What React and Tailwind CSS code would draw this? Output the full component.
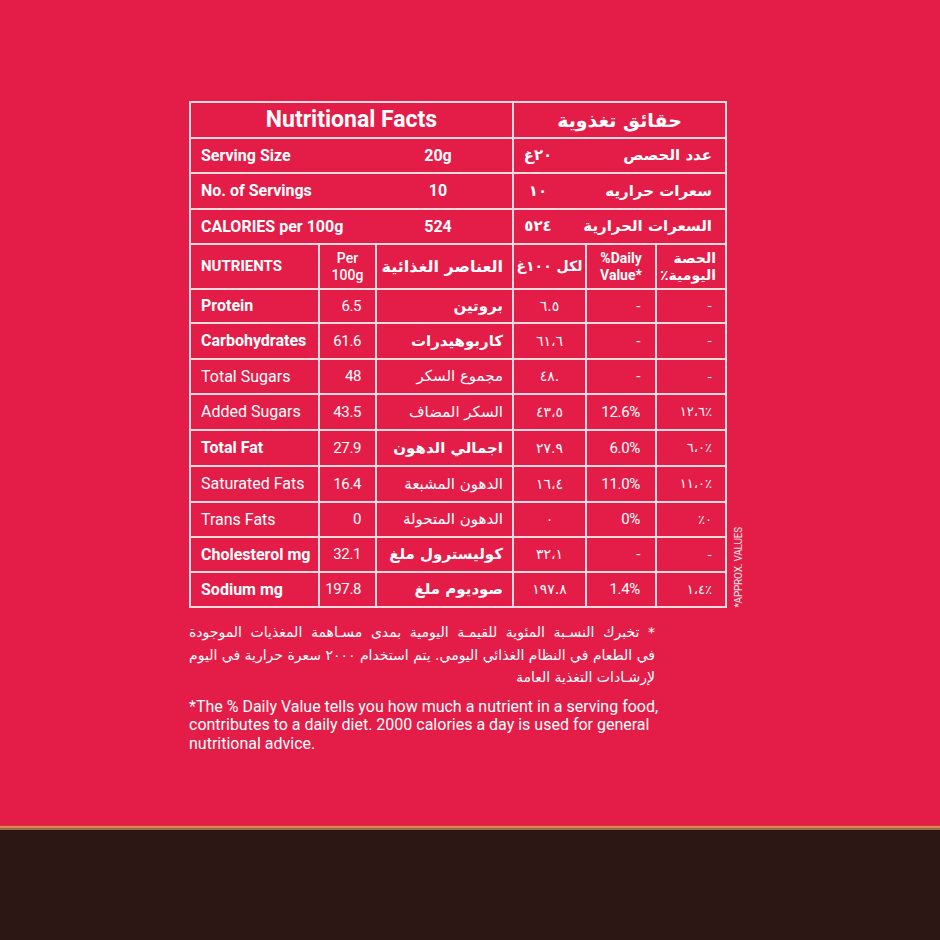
import React from 'react';

const en = "font-['Roboto',sans-serif]";
const ar = "font-['DejaVu_Sans',sans-serif]";
const cell = 'bg-[#e31d47] flex items-center';

const top = [
  { label: 'Serving Size', value: '20g', arLabel: 'عدد الحصص', arValue: '٢٠غ' },
  { label: 'No. of Servings', value: '10', arLabel: 'سعرات حراريه', arValue: '١٠' },
  { label: 'CALORIES per 100g', value: '524', arLabel: 'السعرات الحرارية', arValue: '٥٢٤' },
];

const rows = [
  { name: 'Protein', per: '6.5', arName: 'بروتين', arPer: '٦.٥', dv: '-', arDv: '-', bold: true },
  { name: 'Carbohydrates', per: '61.6', arName: 'كاربوهيدرات', arPer: '٦١،٦', dv: '-', arDv: '-', bold: true },
  { name: 'Total Sugars', per: '48', arName: 'مجموع السكر', arPer: '٤٨.', dv: '-', arDv: '-', bold: false },
  { name: 'Added Sugars', per: '43.5', arName: 'السكر المضاف', arPer: '٤٣،٥', dv: '12.6%', arDv: '١٢،٦٪', bold: false },
  { name: 'Total Fat', per: '27.9', arName: 'اجمالي الدهون', arPer: '٢٧.٩', dv: '6.0%', arDv: '٦،٠٪', bold: true },
  { name: 'Saturated Fats', per: '16.4', arName: 'الدهون المشبعة', arPer: '١٦،٤', dv: '11.0%', arDv: '١١،٠٪', bold: false },
  { name: 'Trans Fats', per: '0', arName: 'الدهون المتحولة', arPer: '٠', dv: '0%', arDv: '٪٠', bold: false },
  { name: 'Cholesterol mg', per: '32.1', arName: 'كوليسترول ملغ', arPer: '٣٢،١', dv: '-', arDv: '-', bold: true },
  { name: 'Sodium mg', per: '197.8', arName: 'صوديوم ملغ', arPer: '١٩٧.٨', dv: '1.4%', arDv: '١،٤٪', bold: true },
];

const NutritionTable = () => (
  <div className="grid w-[538px] gap-[2px] bg-[#f6dade] p-[2px] text-white grid-cols-[127px_55px_135px_71px_68px_68px] grid-rows-[34px_33px_34px_33px_43px_32px_34px_33px_34px_34px_34px_33px_33px_33px]">
    {/* title row */}
    <div className={`${cell} col-span-3 justify-center ${en} text-[23px] font-bold`}>
      Nutritional Facts
    </div>
    <div dir="rtl" className={`${cell} col-span-3 justify-center ${ar} text-[19px] font-bold`}>
      حقائق تغذوية
    </div>

    {top.map((r) => (
      <React.Fragment key={r.label}>
        <div className={`${cell} col-span-3 pl-[10px] pr-[34px] ${en} text-[16px] font-bold`}>
          <span className="flex-1">{r.label}</span>
          <span className="w-[80px] text-center">{r.value}</span>
        </div>
        <div dir="rtl" className={`${cell} col-span-3 pr-[13px] pl-[4px] ${ar} text-[15px] font-bold`}>
          <span className="flex-1">{r.arLabel}</span>
          <span className="w-[40px] text-center">{r.arValue}</span>
        </div>
      </React.Fragment>
    ))}

    {/* header row */}
    <div className={`${cell} pl-[10px] ${en} text-[15px] font-bold`}>NUTRIENTS</div>
    <div className={`${cell} flex-col justify-center text-center ${en} text-[14px] font-medium leading-[17px]`}>
      <span>Per</span>
      <span>100g</span>
    </div>
    <div dir="rtl" className={`${cell} pr-[9px] ${ar} text-[16px] font-bold`}>العناصر الغذائية</div>
    <div dir="rtl" className={`${cell} justify-center ${ar} text-[14px] font-bold`}>لكل ١٠٠غ</div>
    <div className={`${cell} flex-col justify-center text-center ${en} text-[14px] font-bold leading-[17px]`}>
      <span>%Daily</span>
      <span>Value*</span>
    </div>
    <div dir="rtl" className={`${cell} flex-col items-start justify-center pr-[9px] ${ar} text-[14px] font-bold leading-[17px]`}>
      <span>الحصة</span>
      <span>اليومية٪</span>
    </div>

    {rows.map((r) => (
      <React.Fragment key={r.name}>
        <div className={`${cell} pl-[10px] ${en} text-[16px] ${r.bold ? 'font-bold' : 'font-normal'}`}>
          {r.name}
        </div>
        <div className={`${cell} justify-end pr-[14px] ${en} text-[15px] tracking-[-0.4px]`}>{r.per}</div>
        <div
          dir="rtl"
          className={`${cell} pr-[9px] ${ar} ${r.bold ? 'text-[15px] font-bold' : 'text-[15px] font-normal'}`}
        >
          {r.arName}
        </div>
        <div dir="ltr" className={`${cell} justify-center ${ar} text-[14px]`}>{r.arPer}</div>
        <div className={`${cell} justify-end pr-[15px] ${en} text-[15px] tracking-[-0.3px]`}>{r.dv}</div>
        <div dir="ltr" className={`${cell} justify-end pr-[13px] ${ar} text-[13px]`}>{r.arDv}</div>
      </React.Fragment>
    ))}
  </div>
);

export default function App() {
  return (
    <div className="flex h-[940px] w-full flex-col bg-[#e31d47]">
      <div className="flex h-[825px] flex-col pl-[189px] pt-[101px]">
        <div className="flex items-end gap-[6px]">
          <NutritionTable />
          <div className={`${en} text-[10px] leading-[11px] text-[#f8e3e6] [writing-mode:vertical-rl] rotate-180 tracking-[-0.2px]`}>
            *APPROX. VALUES
          </div>
        </div>

        <div dir="rtl" className={`mt-[13px] w-[466px] ${ar} text-[14px] leading-[22.5px] text-white`}>
          <p className="whitespace-nowrap text-justify [text-align-last:justify]">
            * تخبرك النسـبة المئوية للقيمـة اليومية بمدى مسـاهمة المغذيات الموجودة
          </p>
          <p className="whitespace-nowrap text-justify [text-align-last:justify] [word-spacing:-1px]">
            في الطعام في النظام الغذائي اليومي. يتم استخدام ٢٠٠٠ سعرة حرارية في اليوم
          </p>
          <p className="text-right">لإرشـادات التغذية العامة</p>
        </div>

        <p className={`mt-[9px] ${en} text-[16px] leading-[18.5px] text-white`}>
          *The % Daily Value tells you how much a nutrient in a serving food,
          <br />
          contributes to a daily diet. 2000 calories a day is used for general
          <br />
          nutritional advice.
        </p>
      </div>
      <div className="h-[1px] bg-[#d2393b]" />
      <div className="h-[2px] bg-[#e08552]" />
      <div className="h-[2px] bg-[#9a6a45]" />
      <div className="flex-1 bg-[#2d1715]" />
    </div>
  );
}
